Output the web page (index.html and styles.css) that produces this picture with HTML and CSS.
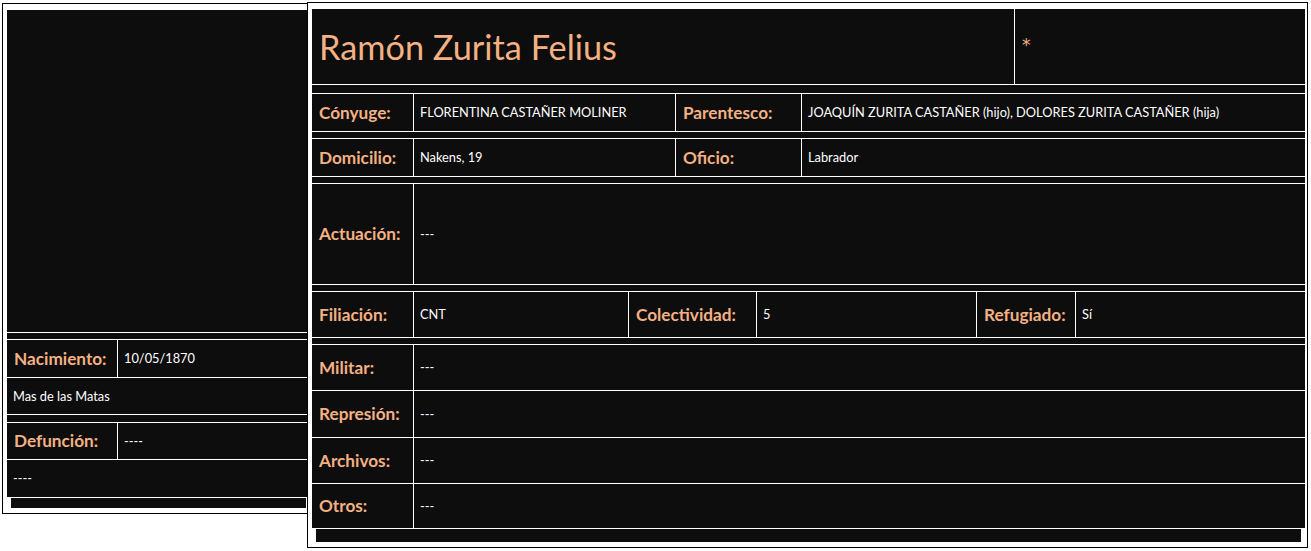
FILE: index.html
```html
<!DOCTYPE html>
<html lang="es">
<head>
<meta charset="utf-8">
<title>Ramón Zurita Felius</title>
<link rel="stylesheet" href="styles.css">
</head>
<body>
<div class="page">
  <section class="card card-left">
    <div class="sheet">
      <div class="photo"></div>
      <div class="tbl">
        <div class="row row-37 cols-left">
          <div class="cell label">Nacimiento:</div>
          <div class="cell value">10/05/1870</div>
        </div>
        <div class="row row-36">
          <div class="cell value">Mas de las Matas</div>
        </div>
      </div>
      <div class="tbl tbl-gap7">
        <div class="row row-36 cols-left">
          <div class="cell label">Defunción:</div>
          <div class="cell value">----</div>
        </div>
        <div class="row row-37">
          <div class="cell value">----</div>
        </div>
      </div>
    </div>
    <div class="strip strip-left"></div>
  </section>

  <section class="card card-right">
    <div class="sheet">
      <div class="title-row">
        <div class="cell title">Ramón Zurita Felius</div>
        <div class="cell label mark">*</div>
      </div>
      <div class="tbl tbl-gap8">
        <div class="row row-37 cols-pair">
          <div class="cell label">Cónyuge:</div>
          <div class="cell value">FLORENTINA CASTAÑER MOLINER</div>
          <div class="cell label">Parentesco:</div>
          <div class="cell value">JOAQUÍN ZURITA CASTAÑER (hijo), DOLORES ZURITA CASTAÑER (hija)</div>
        </div>
      </div>
      <div class="tbl">
        <div class="row row-37 cols-pair">
          <div class="cell label">Domicilio:</div>
          <div class="cell value">Nakens, 19</div>
          <div class="cell label">Oficio:</div>
          <div class="cell value">Labrador</div>
        </div>
      </div>
      <div class="tbl">
        <div class="row row-100 cols-single">
          <div class="cell label">Actuación:</div>
          <div class="cell value">---</div>
        </div>
      </div>
      <div class="tbl">
        <div class="row row-45 cols-triple">
          <div class="cell label">Filiación:</div>
          <div class="cell value">CNT</div>
          <div class="cell label">Colectividad:</div>
          <div class="cell value">5</div>
          <div class="cell label">Refugiado:</div>
          <div class="cell value">Sí</div>
        </div>
      </div>
      <div class="tbl">
        <div class="row row-45 cols-single">
          <div class="cell label">Militar:</div>
          <div class="cell value">---</div>
        </div>
        <div class="row row-46 cols-single">
          <div class="cell label">Represión:</div>
          <div class="cell value">---</div>
        </div>
        <div class="row row-45 cols-single">
          <div class="cell label">Archivos:</div>
          <div class="cell value">---</div>
        </div>
        <div class="row row-44 cols-single">
          <div class="cell label">Otros:</div>
          <div class="cell value">---</div>
        </div>
      </div>
    </div>
    <div class="strip strip-right"></div>
  </section>
</div>
</body>
</html>
```

FILE: styles.css
```css
* {
  box-sizing: border-box;
}

html, body {
  margin: 0;
  padding: 0;
  background: #ffffff;
}

body {
  font-family: Lato, "Open Sans", "Liberation Sans", sans-serif;
  color: #ffffff;
}

.page {
  display: flex;
  align-items: flex-start;
  padding: 2px 0 0 2px;
}

.card {
  background: #ffffff;
  border: 1px solid #000000;
}

.card-left {
  width: 305px;
  margin-top: 1px;
  border-right: none;
  padding: 6px 0 5px 4px;
}

.card-right {
  width: 1001px;
  padding: 6px 2px 5px 4px;
}

.sheet {
  background: #0d0d0d;
}

.photo {
  height: 323px;
  border-bottom: 1px solid #ffffff;
}

.tbl {
  margin-top: 6px;
  border-top: 1px solid #ffffff;
}

.tbl-gap7 {
  margin-top: 7px;
}

.tbl-gap8 {
  margin-top: 8px;
}

.row {
  display: grid;
  border-bottom: 1px solid #ffffff;
}

.row-36 { height: 37px; }
.row-37 { height: 38px; }
.row-44 { height: 45px; }
.row-45 { height: 46px; }
.row-46 { height: 47px; }
.row-100 { height: 101px; }

.cols-left { grid-template-columns: 110px 1fr; }
.cols-pair { grid-template-columns: 101px 262px 126px 1fr; }
.cols-single { grid-template-columns: 101px 1fr; }
.cols-triple { grid-template-columns: 101px 215px 128px 220px 99px 1fr; }

.cell {
  display: flex;
  align-items: center;
  padding: 0 7px;
  white-space: nowrap;
  overflow: hidden;
}

.cell + .cell {
  border-left: 1px solid #ffffff;
}

.label {
  color: #f4b183;
  font-weight: 700;
  font-size: 17.2px;
  padding-bottom: 1px;
}

.value {
  color: #ffffff;
  font-size: 12.8px;
  padding-left: 6px;
  padding-bottom: 1px;
}

.title-row {
  display: grid;
  grid-template-columns: 702px 1fr;
  height: 76px;
  border-bottom: 1px solid #ffffff;
}

.title {
  color: #f4b183;
  font-size: 34.3px;
  font-weight: 400;
}

.mark {
  font-family: "DejaVu Sans", sans-serif;
  font-weight: 400;
  font-size: 17px;
  padding-left: 7px;
  padding-bottom: 3px;
}

.strip {
  height: 13px;
  background: #0d0d0d;
  margin: 0 4px;
}

.strip-left {
  height: 10px;
  margin: 0 1px 0 4px;
}
```
